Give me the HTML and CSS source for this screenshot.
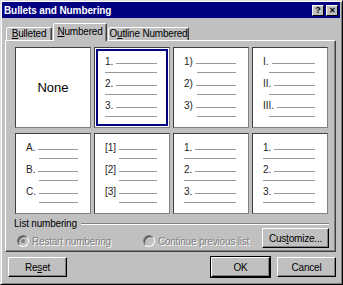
FILE: index.html
```html
<!DOCTYPE html>
<html lang="en">
<head>
    <meta charset="UTF-8">
    <title>Bullets and Numbering</title>
    <link rel="stylesheet" href="styles.css">
</head>
<body>
    <div class="dialog">
        <div class="titlebar">
            <span class="title">Bullets and Numbering</span>
            <div class="caption-buttons">
                <span class="cap-btn">?</span>
                <span class="cap-btn close">&#x2715;</span>
            </div>
        </div>

        <div class="tabs">
            <div class="tab tab-bulleted"><u>B</u>ulleted</div>
            <div class="tab tab-numbered active"><u>N</u>umbered</div>
            <div class="tab tab-outline">O<u>u</u>tline Numbered</div>
        </div>

        <div class="panel">
            <div class="grid">
                <div class="cell none">None</div>

                <div class="cell selected">
                    <div class="item"><div class="head"><span class="lbl">1.</span><span class="rule"></span></div><div class="sub"></div></div>
                    <div class="item"><div class="head"><span class="lbl">2.</span><span class="rule"></span></div><div class="sub"></div></div>
                    <div class="item"><div class="head"><span class="lbl">3.</span><span class="rule"></span></div><div class="sub"></div></div>
                </div>

                <div class="cell indent-13">
                    <div class="item"><div class="head"><span class="lbl">1)</span><span class="rule"></span></div><div class="sub"></div></div>
                    <div class="item"><div class="head"><span class="lbl">2)</span><span class="rule"></span></div><div class="sub"></div></div>
                    <div class="item"><div class="head"><span class="lbl">3)</span><span class="rule"></span></div><div class="sub"></div></div>
                </div>

                <div class="cell roman indent-6">
                    <div class="item"><div class="head"><span class="lbl">I.</span><span class="rule"></span></div><div class="sub"></div></div>
                    <div class="item"><div class="head"><span class="lbl">II.</span><span class="rule"></span></div><div class="sub"></div></div>
                    <div class="item"><div class="head"><span class="lbl">III.</span><span class="rule"></span></div><div class="sub"></div></div>
                </div>

                <div class="cell indent-13">
                    <div class="item"><div class="head"><span class="lbl">A.</span><span class="rule"></span></div><div class="sub"></div></div>
                    <div class="item"><div class="head"><span class="lbl">B.</span><span class="rule"></span></div><div class="sub"></div></div>
                    <div class="item"><div class="head"><span class="lbl">C.</span><span class="rule"></span></div><div class="sub"></div></div>
                </div>

                <div class="cell indent-14">
                    <div class="item"><div class="head"><span class="lbl">[1]</span><span class="rule"></span></div><div class="sub"></div></div>
                    <div class="item"><div class="head"><span class="lbl">[2]</span><span class="rule"></span></div><div class="sub"></div></div>
                    <div class="item"><div class="head"><span class="lbl">[3]</span><span class="rule"></span></div><div class="sub"></div></div>
                </div>

                <div class="cell">
                    <div class="item"><div class="head"><span class="lbl">1.</span><span class="rule"></span></div><div class="sub"></div></div>
                    <div class="item"><div class="head"><span class="lbl">2.</span><span class="rule"></span></div><div class="sub"></div></div>
                    <div class="item"><div class="head"><span class="lbl">3.</span><span class="rule"></span></div><div class="sub"></div></div>
                </div>

                <div class="cell">
                    <div class="item"><div class="head"><span class="lbl">1.</span><span class="rule"></span></div><div class="sub"></div></div>
                    <div class="item"><div class="head"><span class="lbl">2.</span><span class="rule"></span></div><div class="sub"></div></div>
                    <div class="item"><div class="head"><span class="lbl">3.</span><span class="rule"></span></div><div class="sub"></div></div>
                </div>
            </div>

            <div class="group">
                <div class="group-title"><span>List numbering</span><span class="etch"></span></div>
                <div class="group-row">
                    <label class="radio disabled checked"><span class="dot"></span>Restart numbering</label>
                    <label class="radio disabled"><span class="dot"></span>Continue previous list</label>
                    <button class="btn customize">Cus<u>t</u>omize...</button>
                </div>
            </div>
        </div>

        <div class="footer">
            <button class="btn">Re<u>s</u>et</button>
            <div class="footer-right">
                <button class="btn default">OK</button>
                <button class="btn">Cancel</button>
            </div>
        </div>
    </div>
</body>
</html>
```

FILE: styles.css
```css
* {
    margin: 0;
    padding: 0;
    box-sizing: border-box;
}

body {
    font-family: "Liberation Sans", Arial, sans-serif;
    font-size: 10px;
    letter-spacing: -0.2px;
    color: #000;
    background: #c0c0c0;
    white-space: nowrap;
}

u {
    text-decoration: underline;
    text-underline-offset: 1px;
}

.dialog {
    width: 343px;
    height: 285px;
    background: #c0c0c0;
    border: 1px solid;
    border-color: #dfdfdf #000 #000 #dfdfdf;
    box-shadow: inset 1px 1px 0 #fff, inset -1px -1px 0 #808080;
    padding: 1px 2px 2px 1px;
    display: flex;
    flex-direction: column;
}

/* title bar */
.titlebar {
    height: 16px;
    background: #000080;
    color: #fff;
    display: flex;
    align-items: center;
    justify-content: space-between;
    padding: 0 2px 0 2px;
}

.title {
    font-weight: bold;
    font-size: 10px;
    letter-spacing: -0.1px;
}

.caption-buttons {
    display: flex;
    gap: 2px;
}

.cap-btn {
    width: 12px;
    height: 11px;
    background: #c0c0c0;
    color: #000;
    border: 1px solid;
    border-color: #fff #000 #000 #fff;
    font-size: 9px;
    font-weight: bold;
    line-height: 9px;
    text-align: center;
    letter-spacing: 0;
}

.cap-btn.close {
    font-size: 8px;
}

/* tabs */
.tabs {
    display: flex;
    align-items: flex-end;
    height: 17px;
    margin-top: 5px;
    padding-left: 4px;
    gap: 1px;
    position: relative;
    z-index: 1;
}

.tab {
    height: 13px;
    line-height: 12px;
    text-align: center;
    background: #c0c0c0;
    border: 1px solid;
    border-bottom: none;
    border-color: #fff #404040 transparent #fff;
    border-radius: 2px 2px 0 0;
    box-shadow: inset -1px 0 0 #808080;
}

.tab-bulleted { width: 46px; }
.tab-numbered { width: 54px; }
.tab-outline { width: 81px; }

.tab.active {
    height: 18px;
    margin-bottom: -1px;
    line-height: 16px;
}

/* panel */
.panel {
    height: 212px;
    margin: 0 4px 0 3px;
    border: 1px solid;
    border-color: #fff #404040 #404040 #fff;
    box-shadow: inset -1px -1px 0 #808080;
    padding: 6px 8px 0 9px;
}

.grid {
    display: grid;
    grid-template-columns: repeat(4, 76px);
    grid-template-rows: 81px 81px;
    gap: 5px 3px;
}

.cell {
    background: #fff;
    border: 1px solid;
    border-color: #404040 #808080 #808080 #404040;
    padding: 8px 12px 0 10px;
}

.cell.none {
    display: flex;
    align-items: center;
    justify-content: center;
    font-size: 13px;
    letter-spacing: 0;
    padding: 0;
}

.cell.selected {
    box-shadow: inset 0 0 0 1px #fff, inset 0 0 0 3px #000080;
}

.item {
    height: 22px;
}

.head {
    display: flex;
    align-items: center;
    height: 12px;
}

.lbl {
    font-size: 10px;
    line-height: 12px;
    letter-spacing: 0;
    color: #222;
}

.rule {
    flex: 1;
    height: 1px;
    margin-left: 3px;
    margin-top: 2px;
    background: #999;
}

.sub {
    height: 1px;
    margin-top: 4px;
    background: #999;
}

.indent-13 .sub { margin-left: 13px; }
.indent-14 .sub { margin-left: 14px; }
.indent-6 .sub { margin-left: 6px; }

/* list numbering group */
.group {
    margin-top: 4px;
    margin-left: -1px;
    margin-right: -2px;
}

.group-title {
    display: flex;
    align-items: center;
    height: 12px;
    line-height: 12px;
}

.etch {
    flex: 1;
    height: 2px;
    margin-left: 4px;
    border-top: 1px solid #808080;
    border-bottom: 1px solid #fff;
}

.group-row {
    display: flex;
    align-items: flex-end;
    margin-top: -2px;
    padding-left: 3px;
}

.radio {
    display: flex;
    align-items: center;
    height: 14px;
    gap: 3px;
}

.radio.disabled {
    color: #808080;
    text-shadow: 1px 1px 0 #fff;
}

.radio + .radio {
    margin-left: 32px;
}

.dot {
    width: 12px;
    height: 12px;
    border-radius: 50%;
    background: #c0c0c0;
    border: 1px solid;
    border-color: #808080 #fff #fff #808080;
    box-shadow: inset 1px 1px 0 #404040;
    display: flex;
    align-items: center;
    justify-content: center;
}

.radio.checked .dot::after {
    content: "";
    width: 4px;
    height: 4px;
    border-radius: 50%;
    background: #808080;
}

/* buttons */
.btn {
    font-family: "Liberation Sans", Arial, sans-serif;
    font-size: 10px;
    letter-spacing: -0.2px;
    height: 20px;
    width: 59px;
    background: #c0c0c0;
    color: #000;
    border: 1px solid;
    border-color: #fff #000 #000 #fff;
    box-shadow: inset -1px -1px 0 #808080;
}

.btn.customize {
    width: 67px;
    margin-left: auto;
}

.btn.default {
    outline: 1px solid #000;
}

.footer {
    display: flex;
    justify-content: space-between;
    margin-top: 5px;
    padding: 0 4px 0 6px;
}

.footer-right {
    display: flex;
    gap: 7px;
}
```
